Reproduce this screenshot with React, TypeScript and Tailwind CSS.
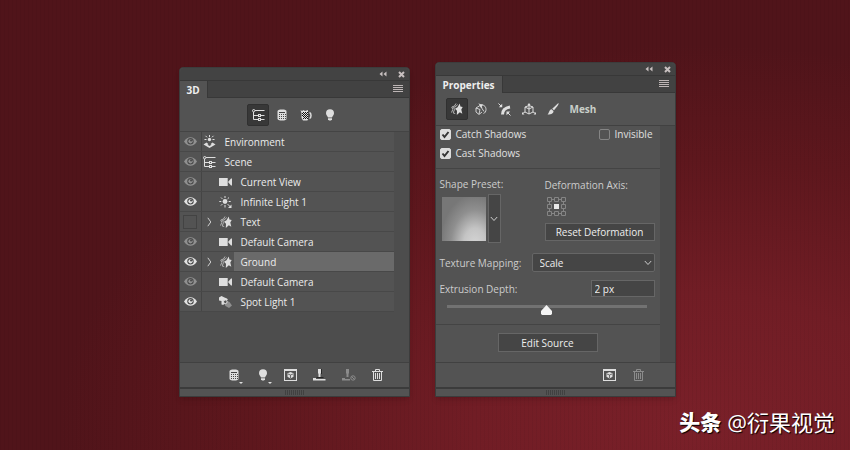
import React, { useState } from 'react';

interface IconProps {
  className?: string;
}

interface SvgProps extends IconProps {
  w: number;
  h: number;
  children: React.ReactNode;
}

const Svg: React.FC<SvgProps> = ({ w, h, className = '', children }) => (
  <svg width={w} height={h} viewBox={`0 0 ${w} ${h}`} fill="none" className={`shrink-0 ${className}`} aria-hidden="true">
    {children}
  </svg>
);

const EyeIcon: React.FC<IconProps> = ({ className }) => (
  <Svg w={13} h={9} className={className}>
    <path d="M0 4.5C2 1.5 4 .3 6.5.3S11 1.5 13 4.5C11 7.5 9 8.7 6.5 8.7S2 7.5 0 4.5Z" fill="currentColor" />
    <circle cx="6.5" cy="4.3" r="3.2" fill="#4b4b4b" />
    <circle cx="6.5" cy="4.3" r="2.1" fill="currentColor" />
    <circle cx="7.1" cy="3.5" r="1.1" fill="#4b4b4b" />
  </Svg>
);

const SceneIcon: React.FC<IconProps> = ({ className }) => (
  <Svg w={13} h={12} className={className}>
    <path d="M3 1.5h9.5M1.5 3v7.5H6M1.5 6.5H6M9 6.5h3.5M9 10.5h3.5" stroke="currentColor" />
    <circle cx="1.7" cy="1.7" r="1.2" stroke="currentColor" />
    <rect x="6.5" y="5.5" width="2" height="2" stroke="currentColor" />
    <rect x="6.5" y="9.5" width="2" height="2" stroke="currentColor" />
  </Svg>
);

const MeshGridIcon: React.FC<IconProps> = ({ className }) => (
  <Svg w={10} h={12} className={className}>
    <path d="M.5 2.5C.5 1 2 .5 5 .5s4.5.5 4.5 2v7c0 1.5-1.5 2-4.5 2s-4.5-.5-4.5-2Z" fill="currentColor" />
    <path d="M2 3.5h6" stroke="#444" />
    <path
      d="M2 5h1v1H2zM4 5h1v1H4zM6 5h1v1H6zM8 5h1v1H8zM2 7h1v1H2zM4 7h1v1H4zM6 7h1v1H6zM8 7h1v1H8zM2 9h1v1H2zM4 9h1v1H4zM6 9h1v1H6zM8 9h1v1H8z"
      fill="#484848"
    />
  </Svg>
);

const MaterialIcon: React.FC<IconProps> = ({ className }) => (
  <Svg w={12} h={12} className={className}>
    <path d="M.5 1 2 2l1.5-1L5 2l3-1v10l-1 .5H3L1.500 9V4Z" fill="currentColor" />
    <path d="M9.500 3.500c2 .5 2 5.500 0 6" stroke="currentColor" strokeWidth="1.5" />
    <path
      d="M3 3h1v1H3zM5 3h1v1H5zM7 3h1v1H7zM2 4h1v1H2zM4 4h1v1H4zM6 4h1v1H6zM3 5h1v1H3zM5 5h1v1H5zM7 5h1v1H7zM2 6h1v1H2zM4 6h1v1H4zM6 6h1v1H6zM3 7h1v1H3zM5 7h1v1H5zM7 7h1v1H7zM4 8h1v1H4zM6 8h1v1H6zM3 9h1v1H3zM5 9h1v1H5zM7 9h1v1H7z"
      fill="#111"
    />
  </Svg>
);

const BulbIcon: React.FC<IconProps> = ({ className }) => (
  <Svg w={10} h={12} className={className}>
    <path d="M5 .3a4 4 0 0 0-4 4C1 6 2.5 7 3 8.5h4C7.5 7 9 6 9 4.3a4 4 0 0 0-4-4Z" fill="currentColor" />
    <path d="M3 9.3h4v1L6 11.5H4l-1-1.2Z" fill="currentColor" />
  </Svg>
);

const EnvironmentIcon: React.FC<IconProps> = ({ className }) => (
  <Svg w={13} h={13} className={className}>
    <circle cx="6.5" cy="4.5" r="1.7" fill="currentColor" />
    <path d="M6.5 0v2M2.5.8 4 2.3M10.5.8 9 2.3M1.5 4.5h2M9.5 4.5h2" stroke="currentColor" />
    <path d="m3.5 7.5-3 2 6 3.5 6-3.500-3-2-3 2.500Z" fill="currentColor" />
    <path d="m6.500 8.500 2 1.200-2 1.200-2-1.200Z" fill="#535353" />
  </Svg>
);

const CameraIcon: React.FC<IconProps> = ({ className }) => (
  <Svg w={13} h={10} className={className}>
    <path d="M0 1h8.7v8H0zM9 5l3-3.5h1v7h-1Z" fill="currentColor" />
  </Svg>
);

const SunIcon: React.FC<IconProps> = ({ className }) => (
  <Svg w={13} h={12} className={className}>
    <circle cx="6" cy="5.5" r="2.4" fill="currentColor" />
    <path d="M6 0v2M6 9v2.5M.3 5.5h2M9.7 5.5h2M2 1.5l1.4 1.4M10 1.5 8.6 2.9M2 9.5l1.4-1.4M8.6 8.1l2.8 2.8" stroke="currentColor" />
    <path d="M12.5 8.5V12H9Z" fill="currentColor" />
  </Svg>
);

const SpotIcon: React.FC<IconProps> = ({ className }) => (
  <Svg w={13} h={12} className={className}>
    <path d="m7 4.5 3.5 1.5L13 9.5 10 12l-3.5-2L5 7Z" fill="#8f8f8f" />
    <path d="M0 1.5 2.5 0l3 1.5L8 2.5 9 4l-3 .5L4.5 9l-2-.5V5L0 4.5Z" fill="currentColor" />
    <circle cx="6.3" cy="5.8" r="1.8" fill="#535353" stroke="currentColor" />
  </Svg>
);

const MeshIcon: React.FC<IconProps> = ({ className }) => (
  <Svg w={12} h={12} className={className}>
    <path d="M5 .5 3.5 3 .8 4l1 2.500L.5 9.500" stroke="#b4b4b4" />
    <path d="M6.500 1.500 5 3.500 2.500 4.500l1 2L2.200 10l2 .5" stroke="#b4b4b4" />
    <path d="m8.800.5.6 3 2.300.5-1.400 2.500 1 4.300-2.500-1.500-3 2.700.2-4.200L4 5.800l2.500-1.600Z" fill="currentColor" />
  </Svg>
);

const DeformIcon: React.FC<IconProps> = ({ className }) => (
  <Svg w={12} h={12} className={className}>
    <path d="M5 2.5 1 5v4l3 2.5L7 9M1 5l4 1.5L4 11M5 2.5C8 1 11 3 11 6.5c0 2-1 3.5-2.5 4M5 2.5l4 6M4 .5 7 5" stroke="currentColor" strokeWidth=".9" />
    <path d="m4.5 1 3.5.5L6 5Z" fill="currentColor" />
  </Svg>
);

const CapIcon: React.FC<IconProps> = ({ className }) => (
  <Svg w={13} h={13} className={className}>
    <path d="M4.500 11.500C4.500 8 6.500 5 12 4" stroke="currentColor" strokeWidth="3" />
    <path d="m.5.5 2.500 2.500M12.500 12.500 10 10" stroke="currentColor" />
    <path d="M4.200.8v3.400H.8ZM8.500 8.500h3.700l-3.700 3.700Z" fill="currentColor" />
  </Svg>
);

const CoordsIcon: React.FC<IconProps> = ({ className }) => (
  <Svg w={14} h={13} className={className}>
    <path d="M7 1v10M3 4l4-1.5L11 4v5l-4 2-4-2ZM3 4l4 2 4-2M3 9 .5 10.5M11 9l2.5 1.5" stroke="currentColor" />
    <path d="m7 0 1.5 2h-3ZM0 9l2.5 2.5H0ZM14 9l-2.5 2.5H14Z" fill="currentColor" />
  </Svg>
);

const BrushIcon: React.FC<IconProps> = ({ className }) => (
  <Svg w={12} h={12} className={className}>
    <path d="M11.5.3c.5.5-.2 1.5-1 2.7L7 7.3 5.2 5.7l4.300-4C10.300 1 11 0 11.500.3Z" fill="currentColor" />
    <path d="M4.5 6.3 6.5 8c0 2-1.5 3.5-6 3.5C2 10.5 2 6.8 4.5 6.3Z" fill="currentColor" />
  </Svg>
);

const RenderIcon: React.FC<IconProps> = ({ className }) => (
  <Svg w={13} h={12} className={className}>
    <path d="M0 0h13v12H0ZM1 2v9h11V2Z" fill="currentColor" fillRule="evenodd" />
    <path d="m6.5 3 3 1.2v3.6l-3 1.7-3-1.7V4.2Z" fill="currentColor" />
    <path d="m4 5 2.5 1L9 5M6.5 6v3" stroke="#535353" strokeWidth=".8" />
  </Svg>
);

const PrintIcon: React.FC<IconProps> = ({ className }) => (
  <Svg w={13} h={12} className={className}>
    <path d="M5 0h3v4l-.5 1v3h-2V5L5 4Z" fill="currentColor" />
    <path d="M0 9h3v1h9.5v1.5H0Z" fill="currentColor" />
    <path d="M3.5 8.5h7M8.5 0v5" stroke="#262626" />
  </Svg>
);

const CancelPrintIcon: React.FC<IconProps> = ({ className }) => (
  <Svg w={14} h={12} className={className}>
    <path d="M4 0h3v4l-.5 1v3h-2V5L4 4ZM0 9h3v1h5v1.5H0Z" fill="currentColor" />
    <circle cx="11" cy="9" r="2.2" stroke="currentColor" />
    <path d="m9.5 7.5 3 3" stroke="currentColor" />
  </Svg>
);

const TrashIcon: React.FC<IconProps> = ({ className }) => (
  <Svg w={11} h={12} className={className}>
    <path d="M0 2.5h11M3.5 2V.5h4V2M1.5 3v8.5h8V3M3.5 4v6M5.5 4v6M7.5 4v6" stroke="currentColor" />
  </Svg>
);

const ChevronDown: React.FC<IconProps> = ({ className }) => (
  <Svg w={8} h={6} className={className}>
    <path d="M.8 1 4 4.5 7.2 1" stroke="currentColor" />
  </Svg>
);

interface PanelProps {
  title: string;
  tools: React.ReactNode;
  footer: React.ReactNode;
  className: string;
  children: React.ReactNode;
}

const Panel: React.FC<PanelProps> = ({ title, tools, footer, className, children }) => (
  <section className={`flex flex-col rounded-t bg-[#535353] border border-[#3c3c3c] shadow-md ${className}`}>
    <header>
      <div className="h-3 flex items-center justify-end gap-[11px] pr-1 rounded-t bg-[#434343] text-[#c8c0c0]">
        <button type="button" aria-label="Collapse panel">
          <Svg w={8} h={6}>
            <path d="M3.5.5v5L.5 3ZM7.5.5v5l-3-2.5Z" fill="currentColor" />
          </Svg>
        </button>
        <button type="button" aria-label="Close panel">
          <Svg w={7} h={7}>
            <path d="m1 1 5 5M6 1 1 6" stroke="currentColor" strokeWidth="2" />
          </Svg>
        </button>
      </div>
      <div className="h-[18px] flex items-stretch border-t border-b border-[#383838] bg-[#424242]">
        <h2 className="-mb-px px-[7px] flex items-center border-r border-[#383838] bg-[#535353] text-[10px] leading-4 font-bold text-[#eeeeee]">
          {title}
        </h2>
        <button type="button" aria-label="Panel menu" className="ml-auto mr-[6px] text-[#bdb5b5]">
          <Svg w={10} h={8}>
            <path d="M0 .5h10M0 2.5h10M0 4.5h10M0 6.5h10" stroke="currentColor" />
          </Svg>
        </button>
      </div>
    </header>
    {tools}
    {children}
    <footer>
      <div className="h-[25px] flex items-center border-t border-[#414141] text-[#dedede]">{footer}</div>
      <div className="h-[9px] flex items-center justify-center border-t-2 border-[#3b3b3b]">
        <div className="h-[5px] w-[19px] bg-[repeating-linear-gradient(90deg,#414141_0_1px,#535353_1px_2px)]" />
      </div>
    </footer>
  </section>
);

interface ToolButtonProps {
  label: string;
  active?: boolean;
  children: React.ReactNode;
}

const ToolButton: React.FC<ToolButtonProps> = ({ label, active, children }) => (
  <button
    type="button"
    aria-label={label}
    className={`size-[22px] flex items-center justify-center text-[#dedede] ${
      active ? 'bg-[#383838] border border-[#303030] rounded-xs' : ''
    }`}
  >
    {children}
  </button>
);

type Visibility = 'on' | 'dim' | 'off';

interface Layer {
  name: string;
  icon: React.FC<IconProps>;
  visibility: Visibility;
  root?: boolean;
  expandable?: boolean;
}

const layers: Layer[] = [
  { name: 'Environment', icon: EnvironmentIcon, visibility: 'dim', root: true },
  { name: 'Scene', icon: SceneIcon, visibility: 'dim', root: true },
  { name: 'Current View', icon: CameraIcon, visibility: 'dim' },
  { name: 'Infinite Light 1', icon: SunIcon, visibility: 'on' },
  { name: 'Text', icon: MeshIcon, visibility: 'off', expandable: true },
  { name: 'Default Camera', icon: CameraIcon, visibility: 'dim' },
  { name: 'Ground', icon: MeshIcon, visibility: 'on', expandable: true },
  { name: 'Default Camera', icon: CameraIcon, visibility: 'dim' },
  { name: 'Spot Light 1', icon: SpotIcon, visibility: 'on' },
];

const LayerRow: React.FC<{ layer: Layer; selected: boolean; onSelect: () => void }> = ({ layer, selected, onSelect }) => {
  const Icon = layer.icon;

  return (
    <li className="h-5 flex border-b border-[#484848] bg-[#535353]">
      <button
        type="button"
        aria-label={`Toggle ${layer.name}`}
        className="w-[22px] flex items-center justify-center border-r border-[#454545]"
      >
        {layer.visibility === 'off' ? (
          <span className="size-[14px] border border-[#434343]" />
        ) : (
          <EyeIcon className={layer.visibility === 'on' ? 'text-[#e2e2e2]' : 'text-[#909090]'} />
        )}
      </button>
      {!layer.root && (
        <span className="w-4 flex items-center justify-center text-[#cfcfcf]">
          {layer.expandable && (
            <Svg w={5} h={10}>
              <path d="m.8.8 3 4.2-3 4.2" stroke="currentColor" />
            </Svg>
          )}
        </span>
      )}
      <span className="w-4 flex items-center justify-center text-[#dedede]">
        <Icon />
      </span>
      <button
        type="button"
        onClick={onSelect}
        className={`flex-1 pl-[7px] text-left text-[10px] leading-4 text-[#ececec] ${selected ? 'bg-[#6a6a6a]' : ''}`}
      >
        {layer.name}
      </button>
    </li>
  );
};

const ScenePanel: React.FC = () => {
  const [selected, setSelected] = useState(6);

  return (
    <Panel
      title="3D"
      className="w-[231px]"
      tools={
        <div className="h-[33px] flex items-center justify-center gap-[2px] pt-px">
          <ToolButton label="Scene" active><SceneIcon /></ToolButton>
          <ToolButton label="Meshes"><MeshGridIcon /></ToolButton>
          <ToolButton label="Materials"><MaterialIcon /></ToolButton>
          <ToolButton label="Lights"><BulbIcon /></ToolButton>
        </div>
      }
      footer={
        <div className="flex-1 flex items-center justify-end gap-4 pr-[26px]">
          <button type="button" aria-label="Add object" className="relative">
            <MeshGridIcon />
            <span className="absolute -right-1 -bottom-[3px] border-x-2 border-t-2 border-x-transparent" />
          </button>
          <button type="button" aria-label="Add light" className="relative ml-[3px]">
            <BulbIcon />
            <span className="absolute -right-1 -bottom-[3px] border-x-2 border-t-2 border-x-transparent" />
          </button>
          <button type="button" aria-label="Render"><RenderIcon /></button>
          <button type="button" aria-label="Start print"><PrintIcon /></button>
          <button type="button" aria-label="Cancel print" disabled className="text-[#8b8b8b]"><CancelPrintIcon /></button>
          <button type="button" aria-label="Delete"><TrashIcon /></button>
        </div>
      }
    >
      <div className="border-t border-[#444444] bg-[#4d4d4d] pr-[15px] pb-[50px]">
        <ul>
          {layers.map((layer, i) => (
            <LayerRow key={i} layer={layer} selected={i === selected} onSelect={() => setSelected(i)} />
          ))}
        </ul>
      </div>
    </Panel>
  );
};

interface CheckFieldProps {
  label: string;
  defaultChecked?: boolean;
}

const CheckField: React.FC<CheckFieldProps> = ({ label, defaultChecked }) => (
  <label className="flex items-center gap-[5px] leading-4 text-[#e0e0e0]">
    <span className="relative flex">
      <input
        type="checkbox"
        defaultChecked={defaultChecked}
        className="peer appearance-none size-[11px] rounded-xs border border-[#858585] checked:border-[#dcdcdc] checked:bg-[#dcdcdc]"
      />
      <Svg w={11} h={11} className="absolute inset-0 hidden peer-checked:block pointer-events-none">
        <path d="m2.5 5.5 2 2.5 4-5" stroke="#333" strokeWidth="2" />
      </Svg>
    </span>
    {label}
  </label>
);

const AxisGrid: React.FC = () => (
  <Svg w={19} h={19}>
    <path
      d="M.5.5h4v4h-4zM7.5.5h4v4h-4zM14.5.5h4v4h-4zM.5 7.5h4v4h-4zM14.5 7.5h4v4h-4zM.5 14.5h4v4h-4zM7.5 14.5h4v4h-4zM14.5 14.5h4v4h-4zM4.5 2.5h3M11.5 2.5h3M4.5 16.5h3M11.5 16.5h3M2.5 4.5v3M2.5 11.5v3M16.5 4.5v3M16.5 11.5v3"
      stroke="#858585"
    />
    <path d="M7 7h5v5H7z" fill="#e8e8e8" />
  </Svg>
);

const PropertiesPanel: React.FC = () => {
  const [depth, setDepth] = useState('2 px');

  return (
    <Panel
      title="Properties"
      className="w-[241px]"
      tools={
        <div className="h-8 flex items-center gap-[2px] pl-[10px]">
          <ToolButton label="Mesh" active><MeshIcon /></ToolButton>
          <ToolButton label="Deform"><DeformIcon /></ToolButton>
          <ToolButton label="Cap"><CapIcon /></ToolButton>
          <ToolButton label="Coordinates"><CoordsIcon /></ToolButton>
          <ToolButton label="Paint"><BrushIcon /></ToolButton>
          <span className="pl-1 text-[10px] leading-4 font-bold text-[#c9cfc9]">Mesh</span>
        </div>
      }
      footer={
        <div className="flex-1 flex items-center justify-end gap-[17px] pr-[31px]">
          <button type="button" aria-label="Render"><RenderIcon /></button>
          <button type="button" aria-label="Delete" disabled className="text-[#8b8b8b]"><TrashIcon /></button>
        </div>
      }
    >
      <div className="border-t border-[#414141] bg-[#4b4b4b] pr-[15px] text-[10px] leading-4 text-[#cccccc]">
        <div className="bg-[#535353]">
          <div className="flex justify-between items-start pl-1 pr-[7px] pb-[7px] border-b border-[#444444]">
            <div className="space-y-[3px]">
              <CheckField label="Catch Shadows" defaultChecked />
              <CheckField label="Cast Shadows" defaultChecked />
            </div>
            <CheckField label="Invisible" />
          </div>

          <div className="pl-1 pr-[5px] pt-[7px] pb-[9px] border-b border-[#444444]">
            <div className="flex justify-between">
              <div>
                <p>Shape Preset:</p>
                <div className="flex items-center pl-[2px] pt-[2px] gap-[2px]">
                  <div className="size-[44px] bg-[radial-gradient(ellipse_at_75%_110%,#d6d6d6_0%,#c4c4c4_25%,#8f8f8f_52%,#777777_75%)]" />
                  <button
                    type="button"
                    aria-label="Choose shape preset"
                    className="w-[13px] h-[49px] flex items-center justify-center bg-[#454545] border border-[#666666] text-[#d0d0d0]"
                  >
                    <ChevronDown />
                  </button>
                </div>
              </div>
              <div className="w-[110px] pt-px">
                <p>Deformation Axis:</p>
                <div className="pl-[2px] pt-[4px] pb-[7px]">
                  <AxisGrid />
                </div>
                <button type="button" className="w-full h-[18px] leading-4 bg-[#454545] border border-[#666666] text-[#eeeeee]">
                  Reset Deformation
                </button>
              </div>
            </div>

            <div className="flex items-center justify-between pt-[10px]">
              <label htmlFor="mapping">Texture Mapping:</label>
              <div className="relative">
                <select
                  id="mapping"
                  defaultValue="Scale"
                  className="appearance-none block w-[123px] h-[19px] pl-[7px] rounded-xs bg-[#454545] border border-[#666666] leading-4 text-[#eeeeee]"
                >
                  <option>Scale</option>
                  <option>Tile</option>
                </select>
                <ChevronDown className="absolute right-[3px] top-[7px] pointer-events-none" />
              </div>
            </div>

            <div className="flex items-center justify-between pt-2">
              <label htmlFor="depth">Extrusion Depth:</label>
              <input
                id="depth"
                value={depth}
                onChange={(e) => setDepth(e.target.value)}
                className="w-16 h-[17px] pl-[3px] bg-[#454545] border border-[#666666] leading-4 text-[#eeeeee]"
              />
            </div>

            <div className="pl-[7px] pr-2 pt-[5px]">
              <input
                type="range"
                aria-label="Extrusion depth"
                min={0}
                max={100}
                defaultValue={50}
                className="appearance-none block w-full h-[13px] bg-transparent bg-[linear-gradient(#727272,#727272)] bg-[length:100%_3px] bg-[position:0_3px] bg-no-repeat [&::-webkit-slider-thumb]:appearance-none [&::-webkit-slider-thumb]:mt-[3px] [&::-webkit-slider-thumb]:w-[11px] [&::-webkit-slider-thumb]:h-[10px] [&::-webkit-slider-thumb]:bg-[#f4f4f4] [&::-webkit-slider-thumb]:[clip-path:polygon(50%_0,100%_60%,100%_90%,90%_100%,10%_100%,0_90%,0_60%)]"
              />
            </div>
          </div>

          <div className="flex justify-center pt-2 pb-[10px]">
            <button type="button" className="w-[100px] h-[19px] leading-4 bg-[#454545] border border-[#666666] text-[#eeeeee]">
              Edit Source
            </button>
          </div>
        </div>
      </div>
    </Panel>
  );
};

const App: React.FC = () => {
  return (
    <div className="min-h-screen flex flex-col bg-[#52141a] bg-[repeating-linear-gradient(90deg,rgba(0,0,0,0.04)_0_1px,transparent_1px_4px),radial-gradient(ellipse_75%_85%_at_82%_95%,#7a2029_0%,#711d25_35%,#5e171d_70%,#50141a_100%)] font-['Open_Sans','Noto_Sans_CJK_SC',sans-serif]">
      <main className="flex-1 flex items-end justify-center gap-[25px] pt-[62px] pl-1">
        <ScenePanel />
        <PropertiesPanel />
      </main>
      <footer className="h-[53px] flex items-center justify-end gap-[6px] pr-[15px] pb-1 text-white [text-shadow:1px_1px_1px_#000]">
        <strong className="text-[21px] leading-8 font-black">头条</strong>
        <span className="text-[22px] leading-8">@衍果视觉</span>
      </footer>
    </div>
  );
};

export default App;
